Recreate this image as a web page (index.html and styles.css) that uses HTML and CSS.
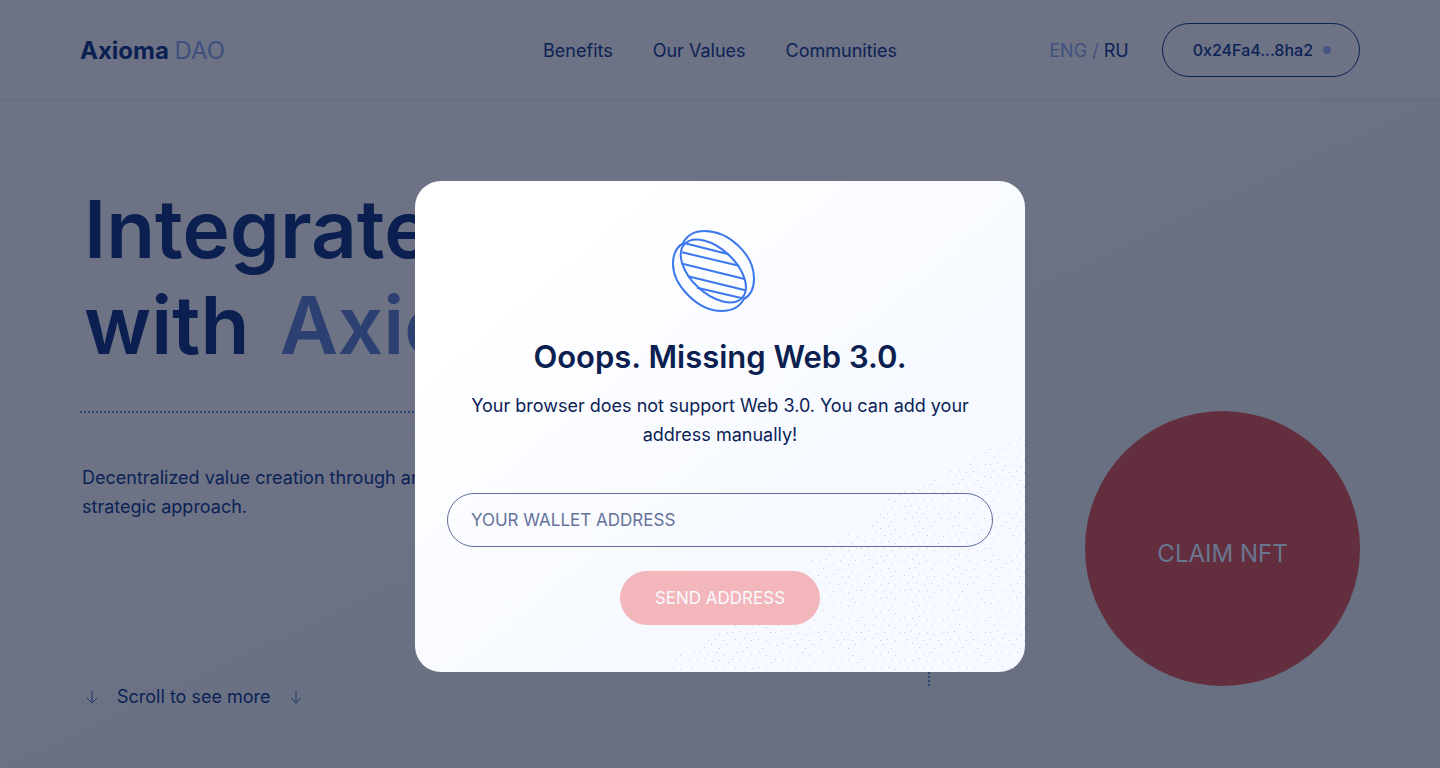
FILE: index.html
```html
<!DOCTYPE html>
<html lang="en">
<head>
<meta charset="utf-8">
<meta name="viewport" content="width=device-width, initial-scale=1">
<title>Axioma DAO</title>
<link rel="stylesheet" href="styles.css">
</head>
<body>
<header class="header">
  <a class="logo" href="#">Axioma <span class="logo-light">DAO</span></a>
  <nav class="nav">
    <a href="#benefits">Benefits</a>
    <a href="#values">Our Values</a>
    <a href="#communities">Communities</a>
  </nav>
  <div class="account">
    <div class="lang"><a class="muted" href="#eng">ENG</a> <span class="muted">/</span> <a href="#ru">RU</a></div>
    <button class="wallet" type="button">0x24Fa4...8ha2<span class="status"></span></button>
  </div>
</header>

<main class="hero">
  <h1 class="title">Integrate<br>with <span class="accent">Axioma</span></h1>
  <div class="details">
    <p class="lead">Decentralized value creation through an<br>strategic approach.</p>
    <button class="claim" type="button">CLAIM NFT</button>
  </div>
  <a class="scroll" href="#benefits">
    <svg class="arrow" viewBox="0 0 12 14" aria-hidden="true"><path d="M6 1v12M1 8l5 5 5-5"/></svg>
    Scroll to see more
    <svg class="arrow" viewBox="0 0 12 14" aria-hidden="true"><path d="M6 1v12M1 8l5 5 5-5"/></svg>
  </a>
</main>

<div class="overlay">
  <section class="modal" role="dialog" aria-modal="true" aria-labelledby="modal-title">
    <svg class="dots" viewBox="0 0 380 240" aria-hidden="true">
      <defs>
        <pattern id="grain" width="43" height="42" patternUnits="userSpaceOnUse">
          <path d="M2 3h1M9 1h1M16 5h1M23 2h1M31 6h1M38 2h1M6 10h1M12 9h1M20 12h1M28 10h1M35 13h1M1 17h1M9 18h1M16 16h1M24 19h1M31 18h1M40 20h1M4 25h1M13 24h1M21 26h1M28 25h1M35 27h1M1 32h1M8 31h1M16 33h1M24 32h1M31 34h1M39 32h1M4 39h1M13 38h1M20 40h1M27 39h1M35 40h1" transform="translate(0 .5)" shape-rendering="crispEdges" stroke="#c6cee0" stroke-width="1"/>
        </pattern>
      </defs>
      <path fill="url(#grain)" d="M0 240L35 220L80 198L140 160L170 120L210 98L250 60L310 35L350 14L380 0V240Z"/>
    </svg>
    <svg class="coin" viewBox="67 59 249 246" aria-hidden="true">
      <path d="M100 98C112 75 135 62 165 62C235 62 313 130 313 205C313 232 303 255 282 266"/>
      <path d="M102 98C80 110 70 130 70 160C70 225 145 302 215 302C248 302 272 290 285 262"/>
      <ellipse cx="191" cy="182" rx="118" ry="67" transform="rotate(43 191 182)"/>
      <path d="M103 98L237 132M97 126L268 166M98 160L285 206M115 198L287 240M142 232L278 264"/>
    </svg>
    <h2 class="modal-title" id="modal-title">Ooops. Missing Web 3.0.</h2>
    <p class="modal-text">Your browser does not support Web 3.0. You can add your address manually!</p>
    <form class="form">
      <input class="field" type="text" placeholder="YOUR WALLET ADDRESS" aria-label="Your wallet address">
      <button class="send" type="submit">SEND ADDRESS</button>
    </form>
  </section>
</div>
</body>
</html>
```
FILE: styles.css
```css
* {
  box-sizing: border-box;
}

body {
  margin: 0;
  min-height: 100vh;
  font: 400 18px/29px Inter, "Liberation Sans", sans-serif;
  color: #0b2256;
  background: linear-gradient(155deg, #6d7284 48%, #687082 65%);
}

a {
  color: inherit;
  text-decoration: none;
}

button,
input {
  font-family: inherit;
}

.header {
  display: grid;
  grid-template-columns: 1fr auto 1fr;
  align-items: center;
  height: 101px;
  padding: 0 80px;
  border-bottom: 1px solid #5f6a84;
}

.logo {
  font-size: 24px;
  font-weight: 700;
  color: #0a1f52;
}

.logo-light {
  font-weight: 400;
  color: #3d5080;
}

.nav {
  display: flex;
  gap: 40px;
}

.account {
  display: flex;
  align-items: center;
  justify-content: flex-end;
  gap: 33px;
}

.muted {
  color: #40527f;
}

.wallet {
  display: flex;
  align-items: center;
  gap: 10px;
  height: 54px;
  padding: 0 28px 0 30px;
  border: 1px solid #0b2256;
  border-radius: 27px;
  background: none;
  color: #0b2256;
  font-size: 16px;
  font-weight: 500;
}

.status {
  width: 8px;
  height: 8px;
  border-radius: 50%;
  background: #455781;
}

.hero {
  padding: 80px 80px 56px;
}

.title {
  margin: 0;
  padding-left: 4px;
  font-size: 80px;
  font-weight: 600;
  line-height: 96px;
  color: #0b1f50;
}

.accent {
  margin-left: 10px;
  color: #2c4071;
}

.details {
  display: flex;
  justify-content: space-between;
  gap: 80px;
  margin-top: 38px;
}

.lead {
  flex: 0 1 850px;
  margin: 0;
  padding: 50px 0 0 2px;
  border-top: 2px dotted #2f4577;
  border-right: 2px dotted #2f4577;
}

.scroll {
  display: flex;
  align-items: center;
  gap: 19px;
  width: max-content;
  margin-top: -4px;
  padding-left: 6px;
}

.arrow {
  width: 12px;
  height: 14px;
  fill: none;
  stroke: #1c3468;
}

.claim {
  width: 275px;
  height: 275px;
  padding: 10px 0 0;
  border: 0;
  border-radius: 50%;
  background: #632f3e;
  color: #6a7690;
  font-size: 24px;
}

.overlay {
  position: absolute;
  inset: 0;
  display: flex;
  align-items: flex-start;
  justify-content: center;
  padding: 181px 16px 0;
}

.modal {
  position: relative;
  width: 100%;
  max-width: 610px;
  padding: 49px 32px 47px;
  border-radius: 26px;
  overflow: hidden;
  background: linear-gradient(140deg, #ffffff 20%, #f6f9ff 62%);
  text-align: center;
}

.dots {
  position: absolute;
  right: 0;
  bottom: 0;
  width: 380px;
  height: 240px;
}

.coin {
  display: block;
  width: 96px;
  height: 82px;
  margin: 0 auto;
  padding-right: 13px;
  fill: none;
  stroke: #3c78ee;
  stroke-width: 6;
}

.modal-title {
  margin: 23px 0 12px;
  font-size: 31px;
  font-weight: 600;
  line-height: 44px;
  color: #0b1f50;
}

.modal-text {
  margin: 0 auto;
  max-width: 520px;
}

.form {
  position: relative;
  display: flex;
  flex-direction: column;
  align-items: center;
  gap: 24px;
  margin-top: 44px;
}

.field {
  width: 100%;
  height: 54px;
  padding: 0 23px;
  border: 1px solid #5f6f99;
  border-radius: 27px;
  background: none;
  color: #0b2256;
  font-size: 17px;
}

.field::placeholder {
  color: #65729a;
  opacity: 1;
}

.send {
  width: 200px;
  height: 54px;
  border: 0;
  border-radius: 27px;
  background: #f2b6bb;
  color: #f8faff;
  font-size: 17px;
}
```
